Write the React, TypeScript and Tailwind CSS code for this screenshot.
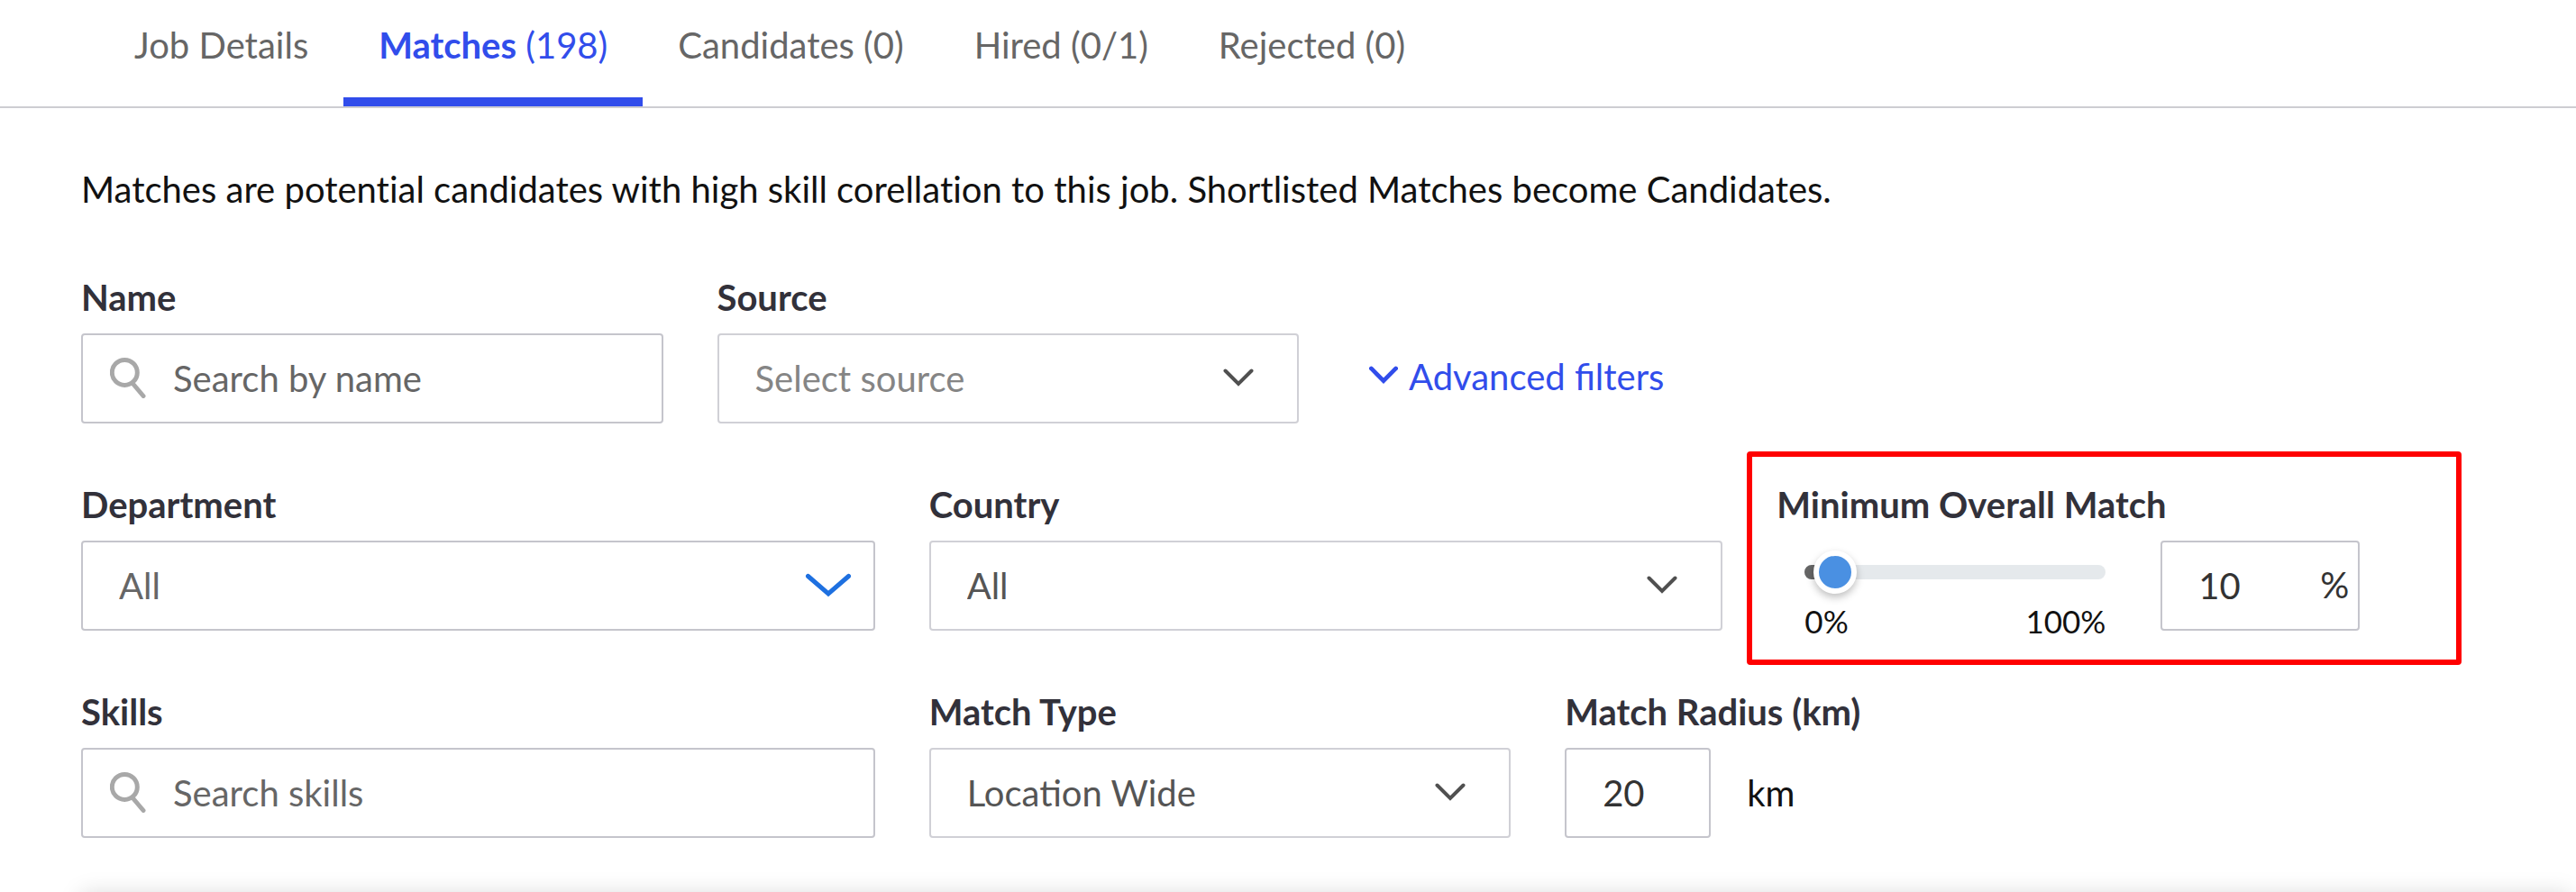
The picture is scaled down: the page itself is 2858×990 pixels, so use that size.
import { useState } from "react";
import type { ReactNode } from "react";
import clsx from "clsx";

interface Tab {
  id: string;
  label: string;
  count?: string;
}

const TABS: Tab[] = [
  { id: "details", label: "Job Details" },
  { id: "matches", label: "Matches", count: "(198)" },
  { id: "candidates", label: "Candidates", count: "(0)" },
  { id: "hired", label: "Hired", count: "(0/1)" },
  { id: "rejected", label: "Rejected", count: "(0)" },
];

function SearchIcon() {
  return (
    <svg
      aria-hidden="true"
      viewBox="0 0 42 46"
      className="pointer-events-none absolute left-8 top-[26px] h-[46px] w-[42px]"
      fill="none"
      stroke="#a8a8a8"
      strokeWidth="5"
      strokeLinecap="round"
    >
      <circle cx="16.300" cy="17.400" r="14" />
      <path d="M26 30.500 37 43.500" />
    </svg>
  );
}

function Chevron({ className }: { className?: string }) {
  return (
    <svg
      aria-hidden="true"
      viewBox="0 0 34 20"
      className={className}
      fill="none"
      stroke="currentColor"
      strokeWidth="4"
      strokeLinecap="round"
    >
      <path d="M2.500 2.500 17 17 31.500 2.500" />
    </svg>
  );
}

interface FieldProps {
  id: string;
  label: string;
  className?: string;
  children: ReactNode;
}

function Field({ id, label, className, children }: FieldProps) {
  return (
    <div className={clsx("relative flex flex-col gap-4", className)}>
      <label htmlFor={id} className="font-bold text-[#32313a]">
        {label}
      </label>
      {children}
    </div>
  );
}

function SearchInput({ id, placeholder }: { id: string; placeholder: string }) {
  return (
    <div className="relative">
      <SearchIcon />
      <input
        id={id}
        type="text"
        placeholder={placeholder}
        className="h-[100px] w-full rounded border-2 border-[#c5c5cc] pl-[100px] pr-10 placeholder:text-[#666]"
      />
    </div>
  );
}

interface SelectProps {
  id: string;
  options: string[];
  muted?: boolean;
  accent?: boolean;
}

function Select({ id, options, muted, accent }: SelectProps) {
  return (
    <div className="relative">
      <select
        id={id}
        defaultValue={options[0]}
        className={clsx(
          "h-[100px] w-full appearance-none rounded border-2 bg-white px-10",
          accent ? "border-[#c5c5cc] text-[#666]" : "border-[#d0d0d6]",
          !accent && (muted ? "text-[#858585]" : "text-[#555]")
        )}
      >
        {options.map((option) => (
          <option key={option}>{option}</option>
        ))}
      </select>
      {accent ? (
        <svg
          aria-hidden="true"
          viewBox="0 0 52 28"
          className="pointer-events-none absolute right-[26px] top-9 h-7 w-[52px]"
          fill="none"
          stroke="#1e70e0"
          strokeWidth="5"
          strokeLinecap="round"
        >
          <path d="M3.500 3.500 26 23 48.500 3.500" />
        </svg>
      ) : (
        <Chevron className="pointer-events-none absolute right-[50px] top-[39px] h-5 w-[34px] text-[#505050]" />
      )}
    </div>
  );
}

function OverallMatch() {
  const [match, setMatch] = useState(10);

  return (
    <Field id="min-match" label="Minimum Overall Match" className="col-span-4">
      <div className="flex h-[100px] items-start gap-[61px] pl-[31px]">
        <div className="w-[334px] pt-[27px]">
          <div className="relative mb-[22px] h-4 rounded-full bg-[#e5e9ec]">
            <div className="h-4 rounded-full bg-[#666]" style={{ width: `${match}%` }} />
            {/* wider than the track so the thumb centre can reach both ends */}
            <input
              type="range"
              aria-label="Minimum overall match"
              min={0}
              max={100}
              value={match}
              onChange={(e) => setMatch(Number(e.target.value))}
              className="absolute -inset-x-6 -top-4 h-12 appearance-none bg-transparent [&::-webkit-slider-thumb]:size-12 [&::-webkit-slider-thumb]:appearance-none [&::-webkit-slider-thumb]:rounded-full [&::-webkit-slider-thumb]:border-6 [&::-webkit-slider-thumb]:border-white [&::-webkit-slider-thumb]:bg-[#4a90e2] [&::-webkit-slider-thumb]:shadow-[0_4px_8px_rgba(0,0,0,0.25)]"
            />
          </div>
          <div className="flex justify-between text-[35px] leading-[48px] text-[#111]">
            <span>0%</span>
            <span>100%</span>
          </div>
        </div>
        <div className="relative">
          <input
            id="min-match"
            type="text"
            value={match}
            onChange={(e) => setMatch(Number(e.target.value) || 0)}
            className="h-[100px] w-[221px] rounded border-2 border-[#c5c5cc] pl-10 pr-14 text-[#333]"
          />
          <span className="absolute right-3 top-[25px] text-[#333]">%</span>
        </div>
      </div>
      <div className="pointer-events-none absolute -left-[33px] -top-[35px] h-[237px] w-[793px] rounded border-6 border-[#ff0000]" />
    </Field>
  );
}

export default function App() {
  const [activeTab, setActiveTab] = useState("matches");

  return (
    <div className="h-screen overflow-hidden bg-white font-['Lato',sans-serif] text-[40px] leading-[48px] text-[#111]">
      <nav className="flex border-b-2 border-[#cdcdd2] pl-[110px]">
        {TABS.map((tab) => {
          const active = tab.id === activeTab;
          return (
            <button
              key={tab.id}
              type="button"
              onClick={() => setActiveTab(tab.id)}
              className={clsx(
                "border-b-10 px-[39px] pb-[34px] pt-[26px] whitespace-nowrap",
                active ? "border-[#314deb] text-[#314deb]" : "border-transparent text-[#666]"
              )}
            >
              <span className={clsx(active && "font-bold")}>{tab.label}</span>
              {tab.count && ` ${tab.count}`}
            </button>
          );
        })}
      </nav>

      <main className="pl-[90px] pr-1.5 pt-[66px]">
        <p className="[font-variant-ligatures:no-common-ligatures]">
          Matches are potential candidates with high skill corellation to this job. Shortlisted
          Matches become Candidates.
        </p>

        <form className="mt-18 grid grid-cols-12 gap-x-[60px] gap-y-[66px]">
          <Field id="name" label="Name" className="col-span-3">
            <SearchInput id="name" placeholder="Search by name" />
          </Field>
          <Field id="source" label="Source" className="col-span-3">
            <Select id="source" options={["Select source"]} muted />
          </Field>
          <div className="col-span-6 flex items-end pb-7 pl-[18px]">
            <button type="button" className="flex items-center gap-3 text-[#314deb]">
              <Chevron className="mb-1 h-5 w-8 stroke-5" />
              Advanced filters
            </button>
          </div>

          <Field id="department" label="Department" className="col-span-4">
            <Select id="department" options={["All"]} accent />
          </Field>
          <Field id="country" label="Country" className="col-span-4">
            <Select id="country" options={["All"]} />
          </Field>
          <OverallMatch />

          <Field id="skills" label="Skills" className="col-span-4">
            <SearchInput id="skills" placeholder="Search skills" />
          </Field>
          <Field id="match-type" label="Match Type" className="col-span-3">
            <Select id="match-type" options={["Location Wide"]} />
          </Field>
          <Field id="radius" label="Match Radius (km)" className="col-span-5">
            <div className="flex items-center gap-10">
              <input
                id="radius"
                type="text"
                defaultValue="20"
                className="h-[100px] w-[162px] rounded border-2 border-[#c5c5cc] px-10 text-[#333]"
              />
              <span>km</span>
            </div>
          </Field>
        </form>

        <section className="mt-[62px] h-40 bg-white shadow-[0_0_24px_rgba(0,0,0,0.15)]" />
      </main>
    </div>
  );
}
